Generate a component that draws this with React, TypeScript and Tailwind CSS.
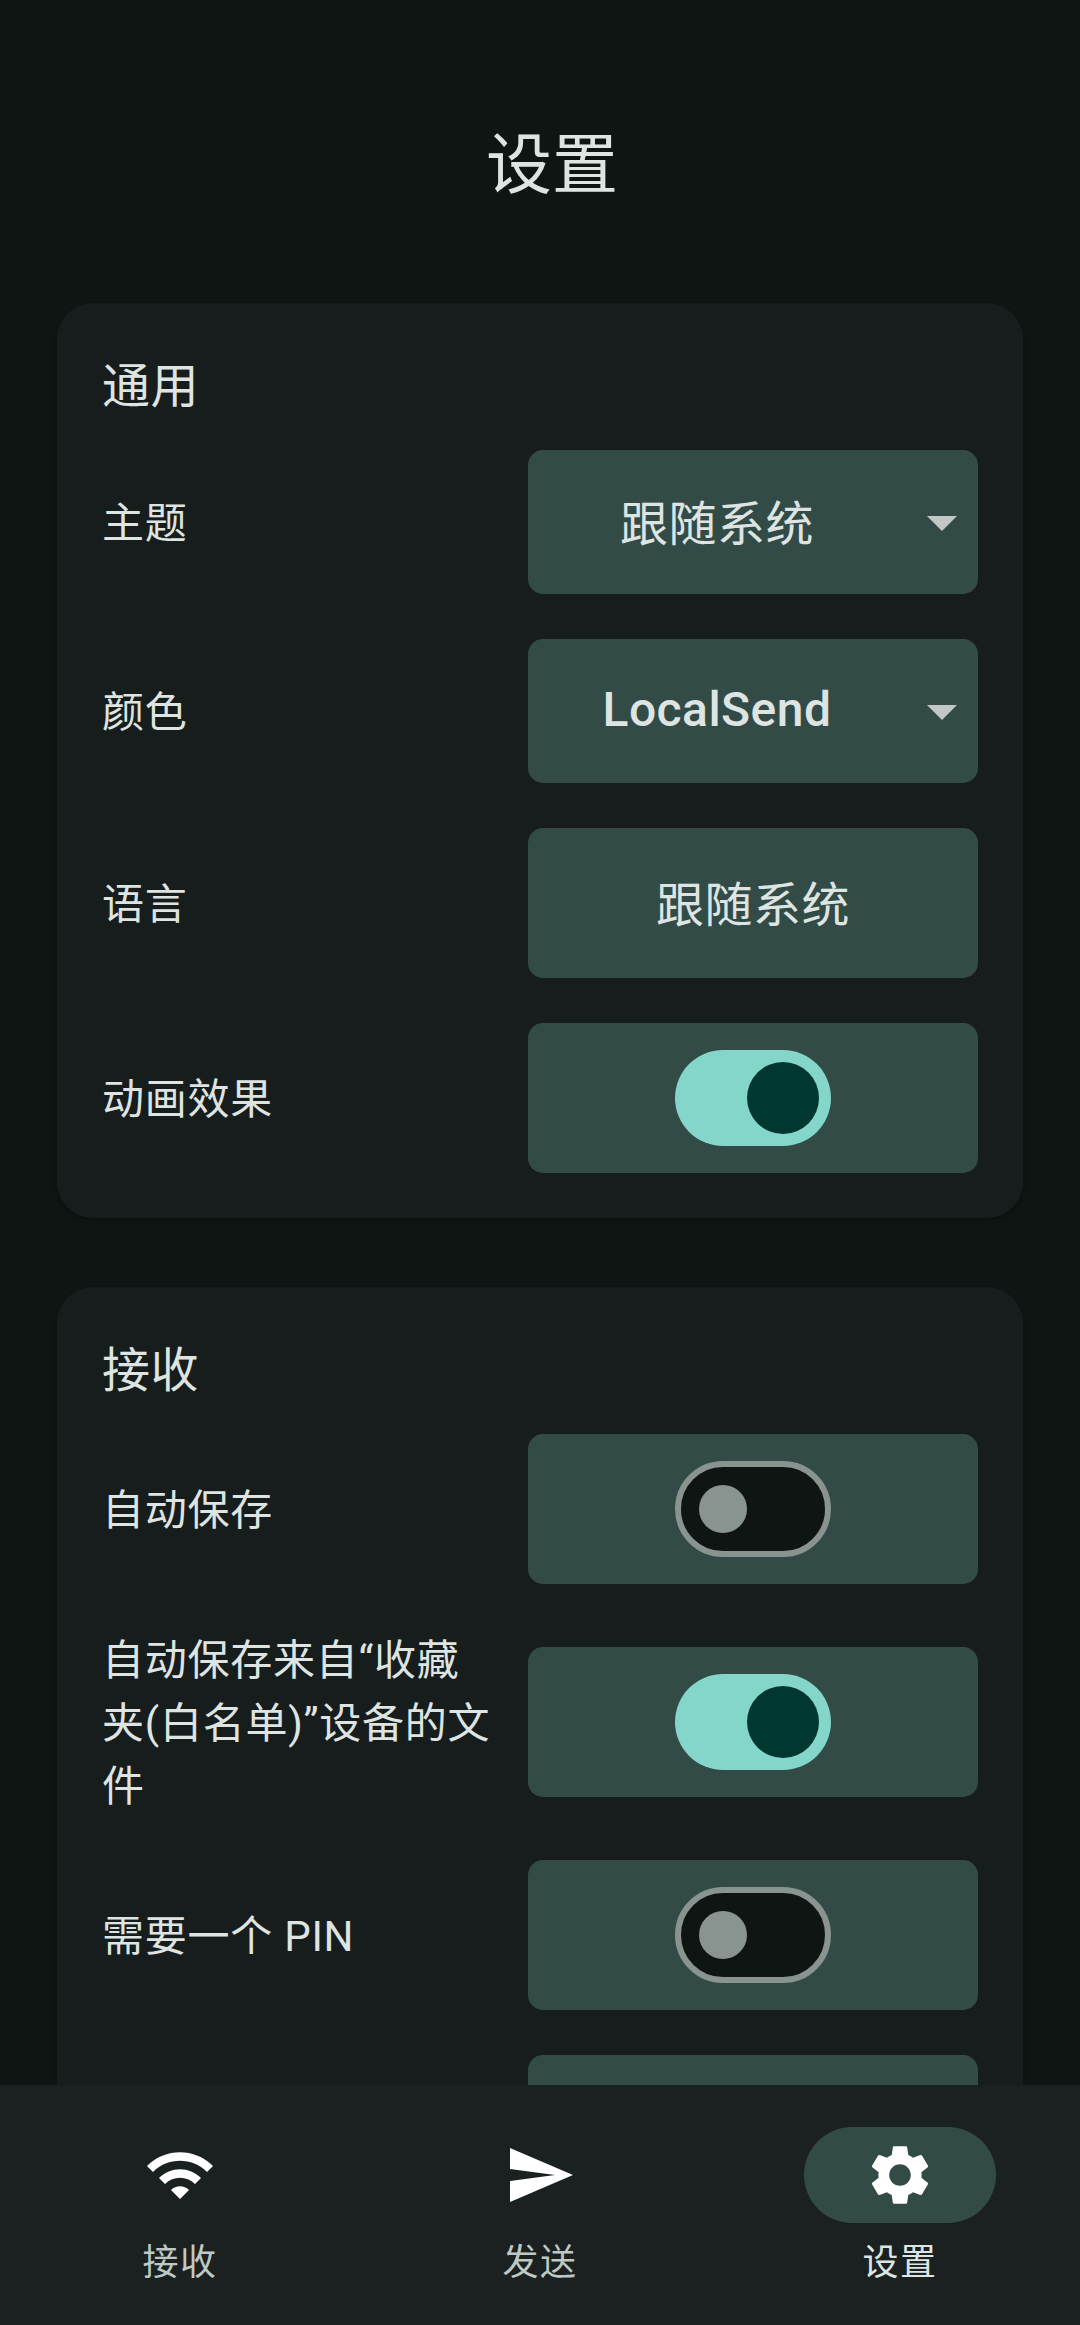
import type { ReactNode } from "react";

function Toggle({ on }: { on: boolean }) {
  return on ? (
    <div className="flex h-24 w-[156px] items-center justify-end rounded-full bg-[#84d6ca] pr-3">
      <div className="size-[72px] rounded-full bg-[#003731]" />
    </div>
  ) : (
    <div className="flex h-24 w-[156px] items-center rounded-full border-6 border-[#899390] bg-[#0e1513] pl-[18px]">
      <div className="size-12 rounded-full bg-[#899390]" />
    </div>
  );
}

function Dropdown({ children }: { children: ReactNode }) {
  return (
    <button className="flex h-36 w-[450px] items-center rounded-[15px] bg-[#334b47] text-[48px] tracking-[0.45px]">
      <span className="flex-1 text-center">{children}</span>
      <svg viewBox="0 0 24 24" className="size-[72px] fill-[#c3c8c6]">
        <path d="M7 10l5 5 5-5z" />
      </svg>
    </button>
  );
}

function Tile({ children }: { children?: ReactNode }) {
  return (
    <div className="flex h-[150px] w-[450px] items-center justify-center rounded-[15px] bg-[#334b47]">
      {children}
    </div>
  );
}

function Row({ label, tall = false, children }: { label: string; tall?: boolean; children: ReactNode }) {
  return (
    <div className={tall ? "flex h-[186px] items-center justify-between" : "flex items-center justify-between"}>
      <div className="w-[396px] pt-[3px] text-[42px] leading-[63px] tracking-[0.75px]">{label}</div>
      {children}
    </div>
  );
}

function Card({ title, children }: { title: string; children: ReactNode }) {
  return (
    <section className="rounded-[36px] bg-[#171d1c] p-[45px] shadow-[0_2px_4px_rgba(0,0,0,0.25)]">
      <h2 className="mb-[30px] h-[72px] text-[48px] leading-[78px] tracking-[0.45px]">{title}</h2>
      <div className="flex flex-col gap-[45px]">{children}</div>
    </section>
  );
}

const tabs = [
  {
    label: "接收",
    active: false,
    path: "M1 9l2 2c4.97-4.97 13.03-4.97 18 0l2-2C16.93 2.93 7.08 2.93 1 9zm8 8l3 3 3-3c-1.65-1.66-4.34-1.66-6 0zm-4-4l2 2c2.76-2.76 7.24-2.76 10 0l2-2C15.14 9.14 8.87 9.14 5 13z",
  },
  {
    label: "发送",
    active: false,
    path: "M2.01 21L23 12 2.01 3 2 10l15 2-15 2z",
  },
  {
    label: "设置",
    active: true,
    path: "M19.14 12.94c.04-.3.06-.61.06-.94 0-.32-.02-.64-.07-.94l2.03-1.58c.18-.14.23-.41.12-.61l-1.92-3.32c-.12-.22-.37-.29-.59-.22l-2.39.96c-.5-.38-1.03-.7-1.62-.94l-.36-2.54c-.04-.24-.24-.41-.48-.41h-3.84c-.24 0-.43.17-.47.41l-.36 2.54c-.59.24-1.13.57-1.62.94l-2.39-.96c-.22-.08-.47 0-.59.22L2.74 8.87c-.12.21-.08.47.12.61l2.03 1.58c-.05.3-.09.63-.09.94s.02.64.07.94l-2.03 1.58c-.18.14-.23.41-.12.61l1.92 3.32c.12.22.37.29.59.22l2.39-.96c.5.38 1.03.7 1.62.94l.36 2.54c.05.24.24.41.48.41h3.84c.24 0 .44-.17.47-.41l.36-2.54c.59-.24 1.13-.56 1.62-.94l2.39.96c.22.08.47 0 .59-.22l1.92-3.32c.12-.22.07-.47-.12-.61l-2.01-1.58zM12 15.6c-1.98 0-3.6-1.62-3.6-3.6s1.62-3.6 3.6-3.6 3.6 1.62 3.6 3.6-1.62 3.6-3.6 3.6z",
  },
];

export default function App() {
  return (
    <div
      lang="zh-CN"
      className="flex h-[2325px] w-[1080px] flex-col overflow-hidden bg-[#0e1513] font-['Roboto','Noto_Sans_CJK_SC',sans-serif] text-[#dee4e1]"
    >
      <main className="min-h-0 flex-1 overflow-hidden px-[57px]">
        <h1 className="h-[303px] pt-[114px] pl-6 text-center text-[66px] leading-[104px]">设置</h1>
        <div className="flex flex-col gap-[69px]">
          <Card title="通用">
            <Row label="主题">
              <Dropdown>
                <span className="block pt-[5px]">跟随系统</span>
              </Dropdown>
            </Row>
            <Row label="颜色">
              <Dropdown>
                <span className="block pb-[3px] font-medium">LocalSend</span>
              </Dropdown>
            </Row>
            <Row label="语言">
              <Tile>
                <span className="pt-[5px] text-[48px] tracking-[0.45px]">跟随系统</span>
              </Tile>
            </Row>
            <Row label="动画效果">
              <Tile>
                <Toggle on />
              </Tile>
            </Row>
          </Card>
          <Card title="接收">
            <Row label="自动保存">
              <Tile>
                <Toggle on={false} />
              </Tile>
            </Row>
            <Row label="自动保存来自“收藏夹(白名单)”设备的文件" tall>
              <Tile>
                <Toggle on />
              </Tile>
            </Row>
            <Row label="需要一个 PIN">
              <Tile>
                <Toggle on={false} />
              </Tile>
            </Row>
            <Row label="">
              <Tile />
            </Row>
          </Card>
        </div>
      </main>
      <nav className="flex h-[240px] shrink-0 justify-between bg-[#1b2120] px-[84px] pt-[42px]">
        {tabs.map((tab) => (
          <div key={tab.label} className="flex w-48 flex-col items-center">
            <div
              className={
                tab.active
                  ? "flex h-24 w-48 items-center justify-center rounded-full bg-[#334b47]"
                  : "flex h-24 w-48 items-center justify-center"
              }
            >
              <svg viewBox="0 0 24 24" className="size-[72px] fill-white">
                <path d={tab.path} />
              </svg>
            </div>
            <span
              className={
                tab.active
                  ? "mt-[13px] text-[36px] leading-[54px] tracking-[1.5px] text-[#dee4e1]"
                  : "mt-[13px] text-[36px] leading-[54px] tracking-[1.5px] text-[#bec9c5]"
              }
            >
              {tab.label}
            </span>
          </div>
        ))}
      </nav>
    </div>
  );
}
